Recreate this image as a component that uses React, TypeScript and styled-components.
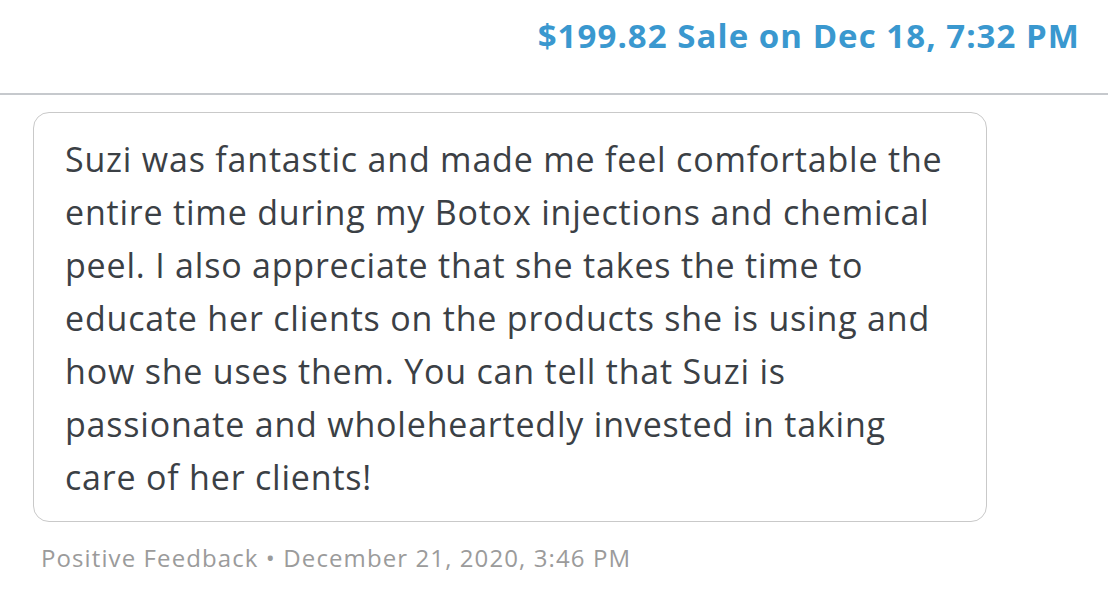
import React from "react";
import styled, { createGlobalStyle } from "styled-components";

const GlobalStyle = createGlobalStyle`
  html, body {
    margin: 0;
    padding: 0;
    background: #ffffff;
  }
  body {
    font-family: "Open Sans", "Liberation Sans", sans-serif;
  }
`;

const Page = styled.div`
  width: 1108px;
  height: 592px;
  overflow: hidden;
  display: flex;
  flex-direction: column;
`;

const Header = styled.header`
  height: 95px;
  display: flex;
  justify-content: flex-end;
  align-items: flex-start;
  padding: 14px 28px 0 0;
  box-sizing: border-box;
  border-bottom: 2px solid #c6c9cd;
`;

const SaleTitle = styled.h1`
  margin: 0;
  font-family: "Open Sans", "Liberation Sans", sans-serif;
  font-weight: 700;
  font-size: 33px;
  line-height: 44px;
  letter-spacing: 1.05px;
  color: #3a98cf;
`;

const Body = styled.main`
  padding: 17px 0 0 33px;
  display: flex;
  flex-direction: column;
`;

const Bubble = styled.div`
  width: 954px;
  box-sizing: border-box;
  border: 1.5px solid #c9c9c9;
  border-radius: 16px;
  padding: 20px 20px 17px 31px;
`;

const Message = styled.p`
  margin: 0;
  font-family: "Open Sans", "Liberation Sans", sans-serif;
  font-size: 34px;
  line-height: 53px;
  letter-spacing: 0.8px;
  color: #3b4045;
`;

const Meta = styled.div`
  margin: 19px 0 0 8px;
  font-family: "Open Sans", "Liberation Sans", sans-serif;
  font-size: 24px;
  line-height: 33px;
  letter-spacing: 1.1px;
  color: #9b9b9b;
`;

const lines = [
  "Suzi was fantastic and made me feel comfortable the",
  "entire time during my Botox injections and chemical",
  "peel. I also appreciate that she takes the time to",
  "educate her clients on the products she is using and",
  "how she uses them. You can tell that Suzi is",
  "passionate and wholeheartedly invested in taking",
  "care of her clients!",
];

export default function App() {
  return (
    <Page>
      <GlobalStyle />
      <Header>
        <SaleTitle>$199.82 Sale on Dec 18, 7:32 PM</SaleTitle>
      </Header>
      <Body>
        <Bubble>
          <Message>
            {lines.map((l, i) => (
              <React.Fragment key={i}>
                {l}
                {i < lines.length - 1 && <br />}
              </React.Fragment>
            ))}
          </Message>
        </Bubble>
        <Meta>Positive Feedback • December 21, 2020, 3:46 PM</Meta>
      </Body>
    </Page>
  );
}
